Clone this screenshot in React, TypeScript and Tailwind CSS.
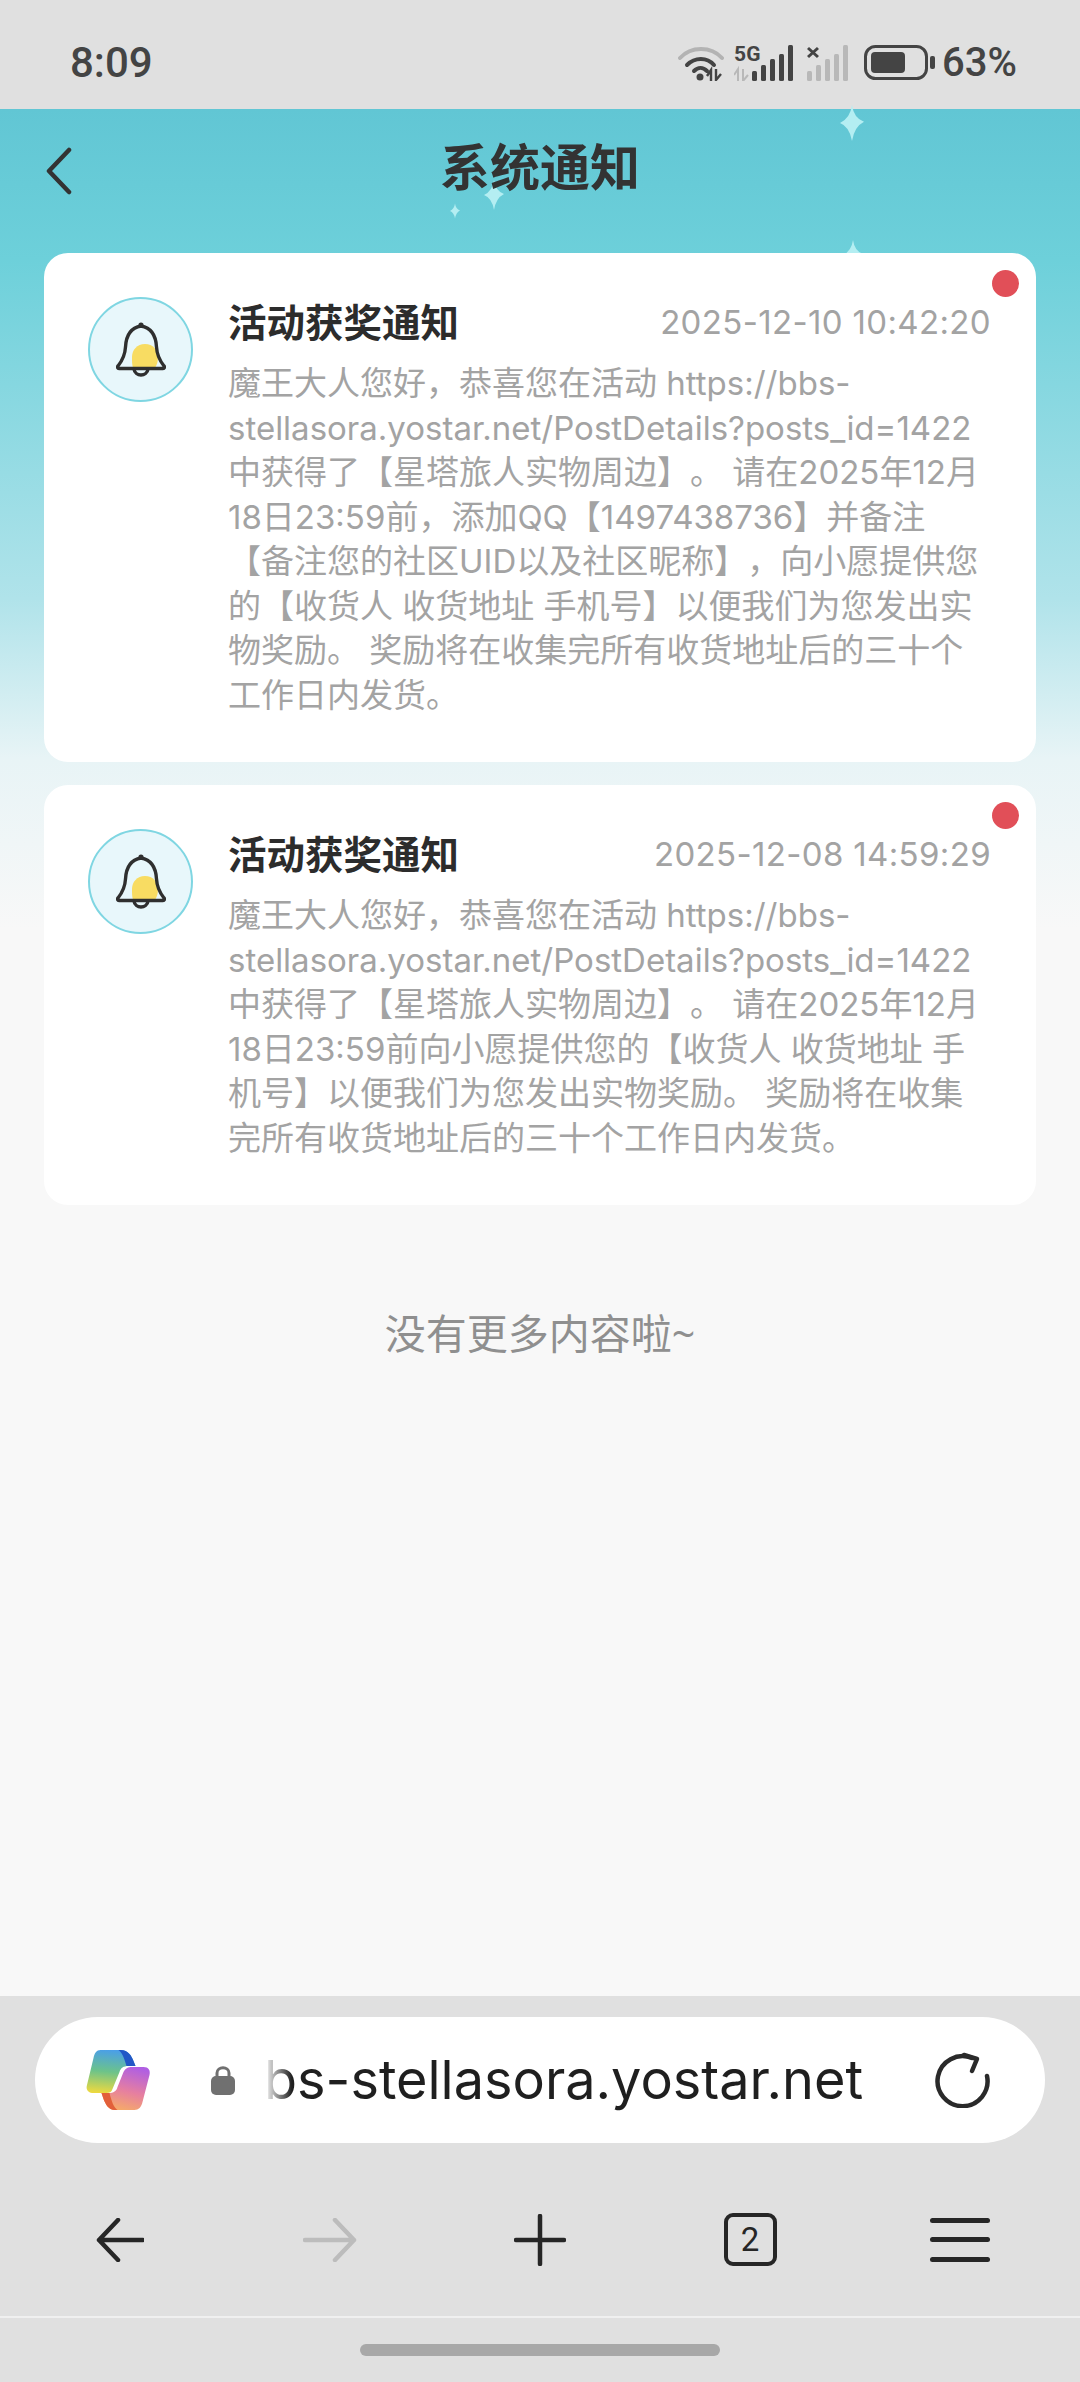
import React from 'react';

const notices = [
  {
    time: '2025-12-10 10:42:20',
    lines: [
      '魔王大人您好，恭喜您在活动 https://bbs-',
      'stellasora.yostar.net/PostDetails?posts_id=1422',
      '中获得了【星塔旅人实物周边】。 请在2025年12月',
      '18日23:59前，添加QQ【1497438736】并备注',
      '【备注您的社区UID以及社区昵称】，向小愿提供您',
      '的【收货人 收货地址 手机号】以便我们为您发出实',
      '物奖励。 奖励将在收集完所有收货地址后的三十个',
      '工作日内发货。',
    ],
  },
  {
    time: '2025-12-08 14:59:29',
    lines: [
      '魔王大人您好，恭喜您在活动 https://bbs-',
      'stellasora.yostar.net/PostDetails?posts_id=1422',
      '中获得了【星塔旅人实物周边】。 请在2025年12月',
      '18日23:59前向小愿提供您的【收货人 收货地址 手',
      '机号】以便我们为您发出实物奖励。 奖励将在收集',
      '完所有收货地址后的三十个工作日内发货。',
    ],
  },
];

function Sparkle({ className }: { className: string }) {
  return (
    <svg viewBox="0 0 20 30" className={`absolute ${className}`}>
      <path d="M10 0 Q11.5 11 20 14 Q12 18 10 30 Q8 18 0 15 Q8.5 11 10 0Z" fill="#b4eef2" />
    </svg>
  );
}

function BellIcon() {
  return (
    <div className="w-[105px] h-[105px] shrink-0 rounded-full border-2 border-[#7fd6e2] bg-[#e8f7fb] flex items-center justify-center">
      <svg viewBox="0 0 50 56" className="w-[50px] h-[56px]">
        <path d="M29 22 C37 22 42 28 42 35 C42 39 41 43 39 46 L17 46 C16 43 16 39 16 35 C16 28 21 22 29 22Z" fill="#f8dc62" />
        <path
          d="M25 4 C14 6 10 15 9.5 25 C9 34 6 39 2 44 C1 45 1.6 46.5 3 46.5 L47 46.5 C48.4 46.5 49 45 48 44 C44 39 41 34 40.5 25 C40 15 36 6 25 4Z"
          fill="none"
          stroke="#2f2f2f"
          strokeWidth="3.4"
          strokeLinejoin="round"
        />
        <circle cx="25" cy="3.2" r="2.6" fill="#2f2f2f" />
        <path d="M18 47 C19 55 31 55 32 47" fill="none" stroke="#2f2f2f" strokeWidth="3.4" />
      </svg>
    </div>
  );
}

function NoticeCard({ time, lines }: { time: string; lines: string[] }) {
  return (
    <div className="relative bg-white rounded-[24px] flex gap-[35px] pl-[44px] pr-[45px] pt-[44px] pb-[45px]">
      <span className="absolute top-[17px] right-[17px] w-[27px] h-[27px] rounded-full bg-[#e14f58]" />
      <BellIcon />
      <div className="flex-1 min-w-0">
        <div className="flex items-center justify-between h-[52px]">
          <h3 className="text-[38.5px] font-bold text-[#2c2c2c] whitespace-nowrap">活动获奖通知</h3>
          <span className="text-[33px] tracking-[0.35px] font-['Inter','Noto_Sans_CJK_SC',sans-serif] text-[#a3a3a3] whitespace-nowrap">{time}</span>
        </div>
        <div className="mt-[12px] text-[33px] [text-spacing-trim:space-all] leading-[44.5px] text-[#a3a3a3] font-['Inter','Noto_Sans_CJK_SC',sans-serif]">
          {lines.map((line) => (
            <p key={line} className="whitespace-nowrap">{line}</p>
          ))}
        </div>
      </div>
    </div>
  );
}

function CopilotLogo() {
  return (
    <svg viewBox="0 0 64 60" className="w-[65px] h-[60px] shrink-0">
      <defs>
        <linearGradient id="cpA" x1="0.45" y1="0" x2="0.35" y2="1">
          <stop offset="0" stopColor="#4a9fe8" />
          <stop offset="0.5" stopColor="#6cc38a" />
          <stop offset="1" stopColor="#ecd940" />
        </linearGradient>
        <linearGradient id="cpB" x1="0.65" y1="0" x2="0.35" y2="1">
          <stop offset="0" stopColor="#b05fe2" />
          <stop offset="0.55" stopColor="#e67fa0" />
          <stop offset="1" stopColor="#f6ab68" />
        </linearGradient>
      </defs>
      <path d="M14 0 L34 0 C42 0 45 6 47 11 L49 16 L42 16 C37 16 34 18 33 22 L26 39 C25 42 23 43 20 43 L7 43 C2 43 -1 40 0.5 35 L7 8 C8 3 10 0 14 0Z" fill="url(#cpA)" />
      <path d="M32 0 L34 0 C42 0 45 6 47 11 L49 16 L40 16 C38 9 36 3 32 0Z" fill="#2257c6" />
      <path d="M45 17 L57 17 C62 17 64 20 63 25 L56 52 C55 57 52 60 48 60 L28 60 C22 60 19 54 17 49 L15 43 L22 43 C27 43 30 41 31 37 L37 22 C39 18 42 17 45 17Z" fill="url(#cpB)" />
      <path d="M15 43 L23 43 C25 51 27 57 31 60 L28 60 C22 60 19 54 17 49Z" fill="#e2603a" />
    </svg>
  );
}

function StatusIcons() {
  return (
    <div className="flex items-center">
      <svg viewBox="0 0 46 36" className="w-[46px] h-[36px]">
        <path d="M2 13 C13 1 33 1 44 13" fill="none" stroke="#b3b3b3" strokeWidth="4" strokeLinecap="round" />
        <path d="M9 20 C17 12 29 12 36 20" fill="none" stroke="#444" strokeWidth="4" strokeLinecap="round" />
        <path d="M16 26 C20 22 25 22 29 26" fill="none" stroke="#444" strokeWidth="4" strokeLinecap="round" />
        <circle cx="22" cy="32" r="3.5" fill="#444" />
        <path d="M33 36 V25 L29 31 M38 24 V35 L43 29" fill="none" stroke="#444" strokeWidth="2.4" />
      </svg>
      <div className="relative ml-[10px]">
        <span className="absolute left-0 top-[-2px] text-[21px] leading-[22px] font-bold text-[#444] font-['Roboto',sans-serif]">5G</span>
        <svg viewBox="0 0 60 36" className="w-[60px] h-[36px]">
          <path d="M4 36 V24 L0 30 M9 24 V36 L14 30" fill="none" stroke="#b8b8b8" strokeWidth="2" />
          <rect x="18" y="26" width="5" height="10" rx="1.5" fill="#444" />
          <rect x="27" y="20" width="5" height="16" rx="1.5" fill="#444" />
          <rect x="36" y="14" width="5" height="22" rx="1.5" fill="#444" />
          <rect x="45" y="9" width="5" height="27" rx="1.5" fill="#444" />
          <rect x="54" y="0" width="5" height="36" rx="1.5" fill="#444" />
        </svg>
      </div>
      <svg viewBox="0 0 42 36" className="w-[42px] h-[36px] ml-[13px]">
        <path d="M1 3 L11 12 M11 3 L1 12" stroke="#444" strokeWidth="3" />
        <rect x="0" y="26" width="5" height="10" rx="1.5" fill="#b8b8b8" />
        <rect x="9" y="20" width="5" height="16" rx="1.5" fill="#b8b8b8" />
        <rect x="18" y="14" width="5" height="22" rx="1.5" fill="#b8b8b8" />
        <rect x="27" y="9" width="5" height="27" rx="1.5" fill="#b8b8b8" />
        <rect x="36" y="0" width="5" height="36" rx="1.5" fill="#b8b8b8" />
      </svg>
      <svg viewBox="0 0 72 36" className="w-[72px] h-[36px] ml-[15px]">
        <rect x="1.5" y="1.5" width="61" height="32" rx="10" fill="none" stroke="#444" strokeWidth="3" />
        <rect x="7" y="7" width="34" height="21" rx="4" fill="#444" />
        <rect x="66" y="11" width="5" height="13" rx="2" fill="#444" />
      </svg>
    </div>
  );
}

export default function App() {
  return (
    <div className="w-[1080px] h-[2382px] flex flex-col bg-[#f8f8f8] font-['Noto_Sans','Noto_Sans_CJK_SC',sans-serif] overflow-hidden">
      <div className="h-[109px] shrink-0 bg-[#e0e0e0] flex items-center justify-between pl-[70px] pr-[63px] pt-[16px]">
        <span className="text-[42px] font-medium text-[#444] font-['Roboto',sans-serif]">8:09</span>
        <div className="flex items-center gap-[6px]">
          <StatusIcons />
          <span className="text-[40px] font-medium text-[#444] font-['Roboto',sans-serif]">63%</span>
        </div>
      </div>

      <main className="relative flex-1 bg-[linear-gradient(180deg,#61c6d4_0,#6dd0da_150px,#b0e3ea_490px,#e8f4f6_650px,#f8f8f8_820px)]">
        <Sparkle className="left-[840px] top-[-4px] w-[24px] h-[36px]" />
        <Sparkle className="left-[482px] top-[71px] w-[24px] h-[30px]" />
        <Sparkle className="left-[450px] top-[92px] w-[10px] h-[20px]" />
        <Sparkle className="left-[843px] top-[126px] w-[20px] h-[40px]" />

        <header className="relative h-[144px] flex items-center justify-center pb-[28px]">
          <svg viewBox="0 0 28 48" className="absolute left-[45px] top-[38px] w-[28px] h-[48px]">
            <path d="M24 3 L4 24 L24 45" fill="none" stroke="#333" strokeWidth="4.5" strokeLinecap="round" strokeLinejoin="round" />
          </svg>
          <h1 className="text-[50px] font-bold text-[#333]">系统通知</h1>
        </header>

        <div className="relative px-[44px] flex flex-col gap-[23px]">
          {notices.map((n) => (
            <NoticeCard key={n.time} time={n.time} lines={n.lines} />
          ))}
          <p className="text-center text-[41px] text-[#8f8f8f] mt-[75px]">没有更多内容啦~</p>
        </div>
      </main>

      <div className="h-[386px] shrink-0 bg-[#e0e0e0] flex flex-col">
        <div className="mt-[21px] mx-[35px] h-[126px] rounded-[63px] bg-white flex items-center pl-[51px] pr-[55px]">
          <CopilotLogo />
          <svg viewBox="0 0 24 30" className="w-[24px] h-[30px] ml-[60px] shrink-0">
            <path d="M6 13 V8 C6 1 18 1 18 8 V13" fill="none" stroke="#707070" strokeWidth="3" />
            <rect x="0" y="11" width="24" height="19" rx="5" fill="#707070" />
          </svg>
          <div className="relative ml-[29px] flex-1 text-[54px] text-[#1f1f1f] whitespace-nowrap leading-none font-['Inter',sans-serif]">
            bs-stellasora.yostar.net
            <span className="absolute left-0 top-0 bottom-0 w-[28px] bg-gradient-to-r from-white to-transparent" />
          </div>
          <svg viewBox="0 0 56 56" className="w-[56px] h-[56px] shrink-0">
            <path d="M38 6 A25 25 0 1 0 53 24" fill="none" stroke="#2a2a2a" strokeWidth="4.5" strokeLinecap="round" />
            <path d="M30 3 L43 7 L38 19" fill="none" stroke="#2a2a2a" strokeWidth="4.5" strokeLinejoin="round" strokeLinecap="round" />
          </svg>
        </div>

        <nav className="flex-1 grid grid-cols-5 place-items-center px-[15px] pt-[20px]">
          <svg viewBox="0 0 48 44" className="w-[48px] h-[44px]">
            <path d="M22 2 L3 22 L22 42 M3 22 H47" fill="none" stroke="#262626" strokeWidth="4.5" strokeLinecap="round" strokeLinejoin="round" />
          </svg>
          <svg viewBox="0 0 54 44" className="w-[54px] h-[44px]">
            <path d="M32 2 L51 22 L32 42 M51 22 H2" fill="none" stroke="#bcbcbc" strokeWidth="4.5" strokeLinecap="round" strokeLinejoin="round" />
          </svg>
          <svg viewBox="0 0 52 52" className="w-[52px] h-[52px]">
            <path d="M26 2 V50 M2 26 H50" fill="none" stroke="#262626" strokeWidth="4.5" strokeLinecap="round" />
          </svg>
          <div className="w-[53px] h-[53px] rounded-[9px] border-[4px] border-[#262626] flex items-center justify-center text-[33px] leading-none text-[#262626] font-['Roboto',sans-serif]">
            2
          </div>
          <div className="w-[60px] h-[44px] flex flex-col justify-between">
            <span className="h-[5px] rounded-full bg-[#262626]" />
            <span className="h-[5px] rounded-full bg-[#262626]" />
            <span className="h-[5px] rounded-full bg-[#262626]" />
          </div>
        </nav>

        <div className="h-[66px] shrink-0 border-t-2 border-[#f0f0f0] flex items-center justify-center">
          <span className="w-[360px] h-[12px] rounded-full bg-[#a8a8a8]" />
        </div>
      </div>
    </div>
  );
}
